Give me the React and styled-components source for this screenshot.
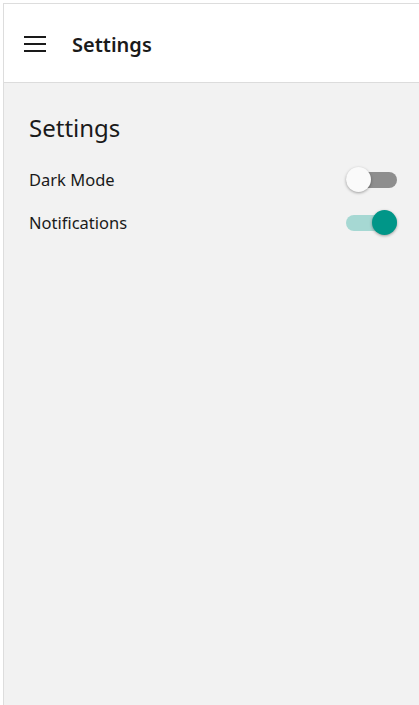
import { useState } from 'react';
import styled, { createGlobalStyle } from 'styled-components';

const GlobalStyle = createGlobalStyle`
	html, body {
		margin: 0;
		padding: 0;
		height: 100%;
		background: #ffffff;
	}
	#root {
		height: 100%;
	}
	* {
		box-sizing: border-box;
	}
`;

const Frame = styled.div`
	margin: 3px 0 0 3px;
	height: calc(100% - 3px);
	border-top: 1px solid #dddddd;
	border-left: 1px solid #dddddd;
	background: #f2f2f2;
	display: flex;
	flex-direction: column;
	font-family: 'Noto Sans', 'Open Sans', sans-serif;
	color: #1a1a1a;
`;

const Header = styled.header`
	height: 79px;
	background: #ffffff;
	border-bottom: 1px solid #dcdcdc;
	display: flex;
	align-items: center;
	padding-left: 20px;
	gap: 24px;
	flex-shrink: 0;
`;

const MenuButton = styled.button`
	border: none;
	background: none;
	padding: 0;
	width: 24px;
	height: 24px;
	display: flex;
	align-items: center;
	justify-content: center;
	cursor: pointer;
`;

const Title = styled.h1`
	margin: 0;
	font-size: 20px;
	font-weight: 600;
	line-height: 28px;
	padding-top: 3px;
	color: #1a1a1a;
`;

const Content = styled.main`
	padding: 28px 22px 0 25px;
	display: flex;
	flex-direction: column;
`;

const Heading = styled.h2`
	margin: 0 0 13px;
	font-size: 24px;
	font-weight: 400;
	line-height: 34px;
`;

const Row = styled.div`
	display: flex;
	align-items: center;
	justify-content: space-between;
	height: 43px;
`;

const Label = styled.span`
	font-size: 16.5px;
`;

const Track = styled.button`
	position: relative;
	width: 51px;
	height: 25px;
	border: none;
	background: none;
	padding: 0;
	cursor: pointer;

	&::before {
		content: '';
		position: absolute;
		left: 0;
		right: 0;
		top: 4.5px;
		height: 16px;
		border-radius: 8px;
		background: ${(props) => (props.on ? '#a6d8d3' : '#8e8e8e')};
	}
`;

const Thumb = styled.span`
	position: absolute;
	top: 0;
	left: ${(props) => (props.on ? '26px' : '0')};
	width: 25px;
	height: 25px;
	border-radius: 50%;
	background: ${(props) => (props.on ? '#009688' : '#fafafa')};
	box-shadow: 0 1px 3px rgba(0, 0, 0, 0.35);
`;

function Toggle({ on, onClick }) {
	return (
		<Track on={on ? 1 : 0} onClick={onClick}>
			<Thumb on={on ? 1 : 0} />
		</Track>
	);
}

function App() {
	const [dark, setDark] = useState(false);
	const [notify, setNotify] = useState(true);

	return (
		<>
			<GlobalStyle />
			<Frame>
				<Header>
					<MenuButton>
						<svg width="24" height="24" viewBox="0 0 24 24">
							<path d="M0 6h22M0 13h22M0 20h22" stroke="#1a1a1a" strokeWidth="2.2" />
						</svg>
					</MenuButton>
					<Title>Settings</Title>
				</Header>
				<Content>
					<Heading>Settings</Heading>
					<Row>
						<Label>Dark Mode</Label>
						<Toggle on={dark} onClick={() => setDark(!dark)} />
					</Row>
					<Row>
						<Label>Notifications</Label>
						<Toggle on={notify} onClick={() => setNotify(!notify)} />
					</Row>
				</Content>
			</Frame>
		</>
	);
}

export default App;
